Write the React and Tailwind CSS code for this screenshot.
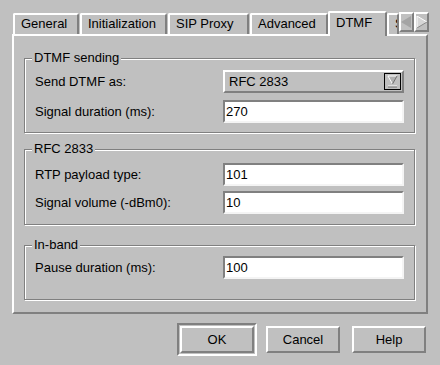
import React from 'react';

const raised = 'border-2 border-t-white border-l-white border-r-[#808080] border-b-[#808080]';
const sunken = 'border-2 border-t-[#808080] border-l-[#808080] border-r-[#f4f4f4] border-b-[#f4f4f4]';

const Tab = ({ label, width, active }) => (
  <div
    className={`${active ? 'h-[25px] mb-[-2px] relative z-10 bg-[#c0c0c0] pt-[2px]' : 'h-[21px] pt-[1px]'} ${width} shrink-0 overflow-hidden whitespace-nowrap rounded-t-[2px] border-l-2 border-t-2 border-r-2 border-l-white border-t-white border-r-[#808080] pl-[6px] text-[13px] leading-[16px]`}
  >
    {label}
  </div>
);

const ArrowButton = ({ dir }) => (
  <div className={`w-[15px] h-[20px] ${raised} flex items-center justify-center bg-[#c0c0c0]`}>
    <svg width="11" height="12" viewBox="0 0 11 12">
      {dir === 'left' ? (
        <polygon points="10,0 10,12 0,6" fill="#a4a4a4" />
      ) : (
        <>
          <polygon points="1,0 1,12 11,6" fill="#d6d6d6" />
          <polyline points="1,12 1,0 11,6" fill="none" stroke="#fff" strokeWidth="1" />
          <line x1="1" y1="12" x2="11" y2="6" stroke="#8a8a8a" strokeWidth="1" />
        </>
      )}
    </svg>
  </div>
);

const Group = ({ title, className, children }) => (
  <div className={`relative border border-[#808080] shadow-[inset_1px_1px_0_#fff,1px_1px_0_#fff] ${className}`}>
    <span className="absolute left-[7px] -top-[9px] bg-[#c0c0c0] px-[2px] text-[13px] leading-[16px]">{title}</span>
    {children}
  </div>
);

const Row = ({ label, children }) => (
  <div className="grid grid-cols-[188px_181px] items-center">
    <span className="text-[13px] leading-[16px]">{label}</span>
    {children}
  </div>
);

const Field = ({ value }) => (
  <div className={`h-[23px] bg-white ${sunken} pl-[1px] text-[13px] leading-[19px]`}>{value}</div>
);

const Combo = ({ value }) => (
  <div className={`h-[23px] ${raised} flex items-center justify-between pl-[4px] pr-[1px] text-[13px]`}>
    <span>{value}</span>
    <div className="w-[17px] h-[17px] border border-black flex items-center justify-center">
      <svg width="13" height="13" viewBox="0 0 13 13">
        <polygon points="2,1 11,1 6.5,9" fill="#b0b0b0" />
        <line x1="2" y1="1" x2="11" y2="1" stroke="#fff" />
        <line x1="2" y1="1" x2="6.5" y2="9" stroke="#fff" />
        <line x1="11" y1="1" x2="6.5" y2="9" stroke="#707070" />
        <line x1="2" y1="11" x2="11" y2="11" stroke="#fff" />
        <line x1="2" y1="12" x2="11" y2="12" stroke="#707070" />
      </svg>
    </div>
  </div>
);

const Button = ({ label, className = '' }) => (
  <div className={`w-[74px] h-[27px] ${raised} flex items-center justify-center text-[13px] ${className}`}>{label}</div>
);

export default function App() {
  return (
    <div
      className="w-[440px] h-[365px] bg-[#c0c0c0] text-black overflow-hidden"
      style={{ fontFamily: '"Liberation Sans", Arial, sans-serif' }}
    >
      {/* tab strip */}
      <div className="flex items-end h-[34px] pl-[13px]">
        <Tab label="General" width="w-[66px]" />
        <div className="w-[1px]" />
        <Tab label="Initialization" width="w-[87px]" />
        <div className="w-[1px]" />
        <Tab label="SIP Proxy" width="w-[81px]" />
        <div className="w-[1px]" />
        <Tab label="Advanced" width="w-[78px]" />
        <Tab label="DTMF" width="w-[59px]" active />
        <Tab label="S" width="w-[12px]" />
        <div className="self-start mt-[12px] flex">
          <ArrowButton dir="left" />
          <ArrowButton dir="right" />
        </div>
      </div>

      {/* page */}
      <div className={`ml-[12px] w-[416px] h-[280px] ${raised} pl-[10px]`}>
        <Group title="DTMF sending" className="mt-[22px] w-[391px] pt-[11px] pb-[9px] pl-[10px]">
          <div className="flex flex-col gap-[7px]">
            <Row label="Send DTMF as:">
              <Combo value="RFC 2833" />
            </Row>
            <Row label="Signal duration (ms):">
              <Field value="270" />
            </Row>
          </div>
        </Group>

        <Group title="RFC 2833" className="mt-[16px] w-[391px] pt-[13px] pb-[10px] pl-[10px]">
          <div className="flex flex-col gap-[5px]">
            <Row label="RTP payload type:">
              <Field value="101" />
            </Row>
            <Row label="Signal volume (-dBm0):">
              <Field value="10" />
            </Row>
          </div>
        </Group>

        <Group title="In-band" className="mt-[20px] w-[391px] pt-[10px] pb-[20px] pl-[10px]">
          <Row label="Pause duration (ms):">
            <Field value="100" />
          </Row>
        </Group>
      </div>

      {/* dialog buttons */}
      <div className="flex items-center justify-end gap-[9px] pr-[14px] mt-[9px]">
        <div className="p-[1px] border-2 border-t-[#808080] border-l-[#808080] border-r-white border-b-white">
          <Button label="OK" />
        </div>
        <Button label="Cancel" />
        <Button label="Help" className="ml-[3px]" />
      </div>
    </div>
  );
}
